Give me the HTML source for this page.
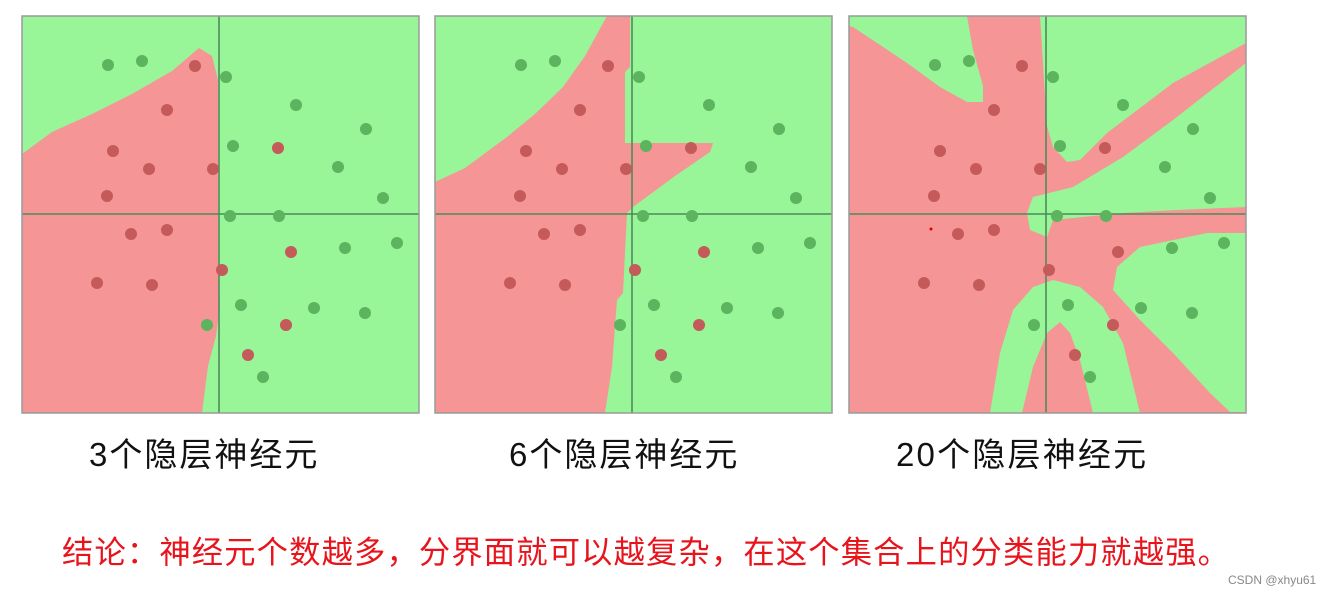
<!DOCTYPE html>
<html><head><meta charset="utf-8"><style>
html,body{margin:0;padding:0;background:#fff;width:1322px;height:596px;overflow:hidden}
svg{position:absolute;left:0;top:0}
.t{position:absolute;font-family:"Liberation Sans","Noto Sans CJK SC",sans-serif;white-space:nowrap;line-height:1}
</style></head><body>
<svg width="1322" height="596" viewBox="0 0 1322 596">
<defs>
<g id="dots">
<g fill="#5cb45e">
<circle cx="86" cy="49" r="6"/><circle cx="120" cy="45" r="6"/><circle cx="204" cy="61" r="6"/><circle cx="274" cy="89" r="6"/><circle cx="344" cy="113" r="6"/><circle cx="211" cy="130" r="6"/><circle cx="316" cy="151" r="6"/><circle cx="361" cy="182" r="6"/><circle cx="208" cy="200" r="6"/><circle cx="257" cy="200" r="6"/><circle cx="323" cy="232" r="6"/><circle cx="375" cy="227" r="6"/><circle cx="219" cy="289" r="6"/><circle cx="292" cy="292" r="6"/><circle cx="343" cy="297" r="6"/><circle cx="185" cy="309" r="6"/><circle cx="241" cy="361" r="6"/>
</g>
<g fill="#c45a5a">
<circle cx="173" cy="50" r="6"/><circle cx="145" cy="94" r="6"/><circle cx="91" cy="135" r="6"/><circle cx="127" cy="153" r="6"/><circle cx="191" cy="153" r="6"/><circle cx="256" cy="132" r="6"/><circle cx="85" cy="180" r="6"/><circle cx="109" cy="218" r="6"/><circle cx="145" cy="214" r="6"/><circle cx="269" cy="236" r="6"/><circle cx="200" cy="254" r="6"/><circle cx="75" cy="267" r="6"/><circle cx="130" cy="269" r="6"/><circle cx="264" cy="309" r="6"/><circle cx="226" cy="339" r="6"/>
</g>
</g>
<g id="axes" stroke="#4f8a5c" stroke-width="1.6"><line x1="197" y1="0" x2="197" y2="397"/><line x1="0" y1="198" x2="397" y2="198"/></g>
</defs>
<g transform="translate(22,16)">
<rect x="0" y="0" width="397" height="397" fill="#98f598"/>
<polygon fill="#f69596" points="0,138 30,116 70,98 110,78 150,55 177,32 190,40 196,64 196,255 198,290 194,320 186,350 180,397 0,397"/>
<use href="#axes"/><use href="#dots"/>
<rect x="0" y="0" width="397" height="397" fill="none" stroke="#9a9a9a" stroke-width="1.5"/>
</g>
<g transform="translate(435,16)">
<rect x="0" y="0" width="397" height="397" fill="#98f598"/>
<polygon fill="#f69596" points="0,166 30,152 72,121 100,98 128,71 150,40 172,0 195,0 195,51 190,56 190,127 278,127 275,136 240,160 198,191 192,197 188,277 182,284 177,351 170,397 0,397"/>
<use href="#axes"/><use href="#dots"/>
<rect x="0" y="0" width="397" height="397" fill="none" stroke="#9a9a9a" stroke-width="1.5"/>
</g>
<g transform="translate(849,16)">
<rect x="0" y="0" width="397" height="397" fill="#f69596"/>
<g fill="#98f598">
<polygon points="0,0 118,0 124,34 134,70 134,86 118,86 91,71 58,47 4,11 0,10"/>
<polygon points="191,0 397,0 397,27 324,67 258,117 231,144 218,146 204,131 198,110"/>
<polygon points="397,47 324,104 274,141 224,171 184,181 178,197 181,214 198,221 204,204 274,197 328,194 397,191"/>
<polygon points="397,217 358,217 291,231 268,251 264,274 291,304 324,337 361,377 381,396 397,396"/>
<polygon points="141,397 151,337 164,294 184,271 204,264 231,271 254,291 274,327 291,397 244,397 231,344 221,317 211,306 198,317 184,351 173,397"/>
</g>
<use href="#axes"/><use href="#dots"/>
<circle cx="82" cy="213" r="1.5" fill="#d00"/>
<rect x="0" y="0" width="397" height="397" fill="none" stroke="#9a9a9a" stroke-width="1.5"/>
</g>
</svg>
<div class="t" style="left:89px;top:438px;font-size:33px;letter-spacing:2px;color:#111">3个隐层神经元</div>
<div class="t" style="left:509px;top:438px;font-size:33px;letter-spacing:2px;color:#111">6个隐层神经元</div>
<div class="t" style="left:896px;top:438px;font-size:33px;letter-spacing:2.2px;color:#111">20个隐层神经元</div>
<div class="t" style="left:62px;top:537px;font-size:31.3px;letter-spacing:1.15px;color:#e8141c">结论：神经元个数越多，分界面就可以越复杂，在这个集合上的分类能力就越强。</div>
<div class="t" style="left:1228px;top:574px;font-size:12px;color:#888">CSDN @xhyu61</div>
</body></html>
